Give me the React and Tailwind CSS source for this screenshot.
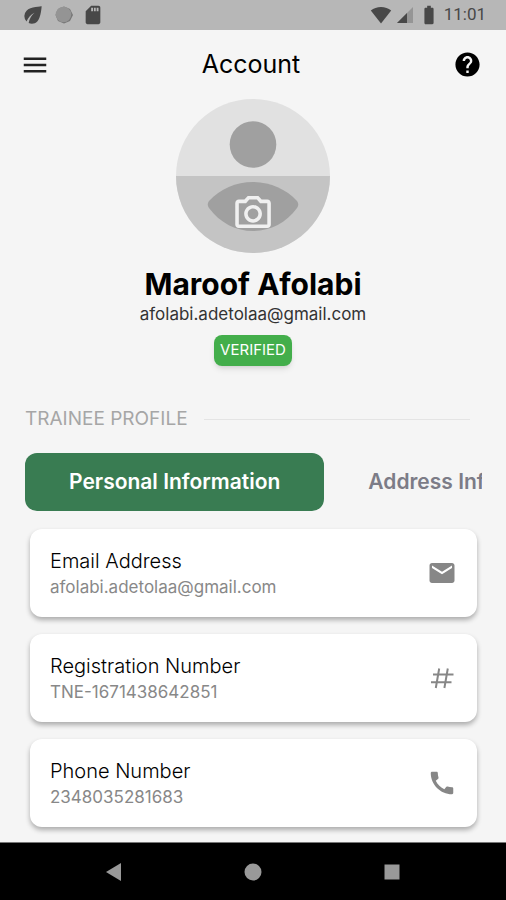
import React, { useState } from 'react';
import { MdCall, MdEco, MdEmail, MdHelp, MdMenu, MdSdCard, MdBatteryFull } from 'react-icons/md';

function HashIcon() {
  return (
    <svg viewBox="0 0 26 26" className="w-[26px] h-[26px]" fill="none" stroke="currentColor" strokeWidth="2" aria-hidden="true">
      <path d="M4 9.600h20.500M2 17.200h20.500M10.200 3.500 6.800 23M18.800 3.500 15.400 23" />
    </svg>
  );
}

const details = [
  { label: 'Email Address', value: 'afolabi.adetolaa@gmail.com', icon: <MdEmail size={30} /> },
  { label: 'Registration Number', value: 'TNE-1671438642851', icon: <HashIcon /> },
  { label: 'Phone Number', value: '2348035281683', icon: <MdCall size={30} /> },
];

function StatusBar() {
  return (
    <div className="flex h-[30px] items-center justify-between bg-[#b7b7b7] pl-5 pr-5 text-[#484848]">
      <div className="flex items-center gap-2">
        <MdEco size={26} />
        <svg viewBox="0 0 20 20" className="w-5 h-5" aria-hidden="true">
          <path d="M10 1.500 16 4 19 10 16 16 10 18.500 4 16 1.500 10 4 4Z" fill="#777" />
          <circle cx="9.500" cy="9.500" r="7.800" fill="#949494" />
        </svg>
        <MdSdCard size={22} />
      </div>
      <div className="flex items-center gap-1">
        <svg viewBox="0 0 22 18" className="w-[22px] h-[18px]" fill="currentColor" aria-hidden="true">
          <path d="M11 17.500.8 4.600C3.600 2.300 7.200 1 11 1s7.400 1.300 10.200 3.600Z" />
        </svg>
        <svg viewBox="0 0 18 18" className="w-[18px] h-[18px]" fill="currentColor" aria-hidden="true">
          <path d="M17 1v16H1Z" opacity="0.3" />
          <path d="M11 7v10H1Z" />
        </svg>
        <MdBatteryFull size={22} />
        <span className="font-['Roboto',sans-serif] text-[17px]">11:01</span>
      </div>
    </div>
  );
}

function Avatar() {
  return (
    <button type="button" aria-label="Change profile photo" className="rounded-full">
      <svg viewBox="0 0 154 154" className="block w-[154px] h-[154px]" aria-hidden="true">
        <circle cx="77" cy="77" r="77" fill="#e1e1e1" />
        <path d="M0 77a77 77 0 0 0 154 0Z" fill="#c4c4c4" />
        <circle cx="77" cy="45.500" r="23.300" fill="#a0a0a0" />
        <path d="M33 102C44 90 60 83 77 83s33 7 44 19q2.500 3.500 0 7C110 124 94 132 77 132s-33-8-44-23q-2.500-3.500 0-7Z" fill="#a0a0a0" />
        {/* camera */}
        <g transform="translate(55.700 91.700) scale(1.780)" fill="#f0f0f0">
          <path d="M20 5h-3.170L15 3H9L7.170 5H4c-1.100 0-2 .9-2 2v12c0 1.100.9 2 2 2h16c1.100 0 2-.9 2-2V7c0-1.100-.9-2-2-2zm0 14H4V7h4.050l1.830-2h4.240l1.830 2H20v12zM12 8c-2.760 0-5 2.240-5 5s2.240 5 5 5 5-2.240 5-5-2.240-5-5-5zm0 8c-1.650 0-3-1.350-3-3s1.350-3 3-3 3 1.350 3 3-1.350 3-3 3z" />
        </g>
      </svg>
    </button>
  );
}

export default function App() {
  const [tab, setTab] = useState('personal');

  const tabs = [
    { id: 'personal', label: 'Personal Information' },
    { id: 'address', label: 'Address Information' },
  ];

  return (
    <div className="flex min-h-screen flex-col bg-[#f5f5f5] font-['Inter',sans-serif] text-black">
      <StatusBar />

      <header className="flex h-[69px] items-center px-5">
        <div className="flex flex-1"><button type="button" aria-label="Menu"><MdMenu size={30} className="text-[#222]" /></button></div>
        <h1 className="text-[25px]">Account</h1>
        <div className="flex flex-1 justify-end pr-1"><button type="button" aria-label="Help"><MdHelp size={29} /></button></div>
      </header>

      <main className="flex-1">
        {/* Profile summary */}
        <section className="flex flex-col items-center">
          <Avatar />
          <h2 className="mt-[11px] text-[30px] leading-10 font-bold">Maroof Afolabi</h2>
          <p className="text-[17px] leading-5 text-[#333]">afolabi.adetolaa@gmail.com</p>
          <span className="mt-[11px] flex h-[31px] items-center rounded-lg bg-[#43ae4b] px-[6px] text-[15px] text-white shadow-md">VERIFIED</span>
        </section>

        <div className="mt-[39px] flex items-center gap-4 pl-[25px] pr-9">
          <h3 className="text-[19px] leading-7 text-[#a6a6a6]">TRAINEE PROFILE</h3>
          <hr className="flex-1 border-[#e4e4e4]" />
        </div>

        {/* Tabs */}
        <div role="tablist" className="mr-6 ml-[25px] mt-5 flex overflow-hidden">
          {tabs.map(t => (
            <button
              key={t.id}
              type="button"
              role="tab"
              aria-selected={tab === t.id}
              onClick={() => setTab(t.id)}
              className={`h-[58px] shrink-0 whitespace-nowrap rounded-xl px-11 text-[21px] font-semibold ${tab === t.id ? 'bg-[#397c52] text-white' : 'text-[#7c7c87]'}`}
            >
              {t.label}
            </button>
          ))}
        </div>

        {/* Details */}
        <div className="mt-[18px] mb-[15px] flex flex-col gap-[17px] pl-[30px] pr-[29px]">
          {details.map(item => (
            <div key={item.label} className="flex h-[88px] items-center justify-between rounded-xl bg-white px-5 shadow-[0_3px_5px_rgba(0,0,0,0.3)]">
              <div>
                <div className="text-xl leading-7 font-light">{item.label}</div>
                <div className="text-[17px] leading-6 text-[#888]">{item.value}</div>
              </div>
              <div className="flex w-[30px] justify-center text-[#878787]">{item.icon}</div>
            </div>
          ))}
        </div>
      </main>

      <nav className="flex h-[59px] items-center justify-around border-t border-[#777] bg-black px-11 text-[#999]">
        <button type="button" aria-label="Back">
          <svg viewBox="0 0 20 20" className="w-5 h-5" fill="currentColor"><path d="M17 1v18L2 10Z" /></svg>
        </button>
        <button type="button" aria-label="Home">
          <svg viewBox="0 0 20 20" className="w-5 h-5" fill="currentColor"><circle cx="10" cy="10" r="8.500" /></svg>
        </button>
        <button type="button" aria-label="Recent apps">
          <svg viewBox="0 0 20 20" className="w-5 h-5" fill="currentColor"><path d="M2.500 2.500h15v15h-15Z" /></svg>
        </button>
      </nav>
    </div>
  );
}
